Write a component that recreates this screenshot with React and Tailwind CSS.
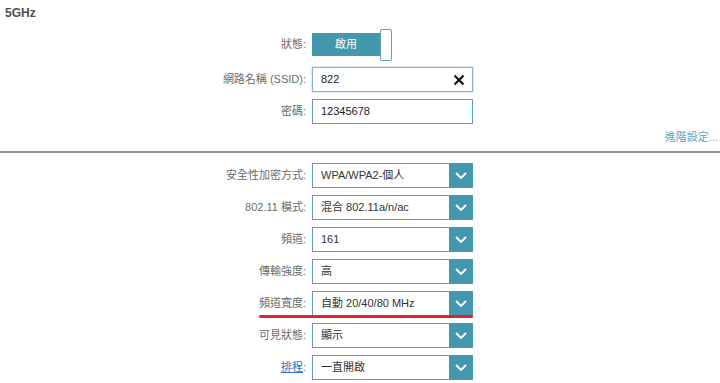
import React from 'react';

const FONT = { fontFamily: '"Liberation Sans", "Noto Sans CJK TC", sans-serif' };

const Chevron = () => (
  <svg width="12" height="8" viewBox="0 0 12 8" fill="none">
    <path d="M1.5 1.5 L6 6 L10.5 1.5" stroke="white" strokeWidth="1.8" strokeLinecap="round" strokeLinejoin="round" />
  </svg>
);

const Row = ({ label, children, link, gap = 'mb-[7px]' }) => (
  <div className={`flex items-center h-[25px] ${gap}`}>
    <div className="w-[312px] pr-[6px] text-right text-[11px] text-[#6b6b6b]">
      {link ? <span className="text-[#2f6fc0] underline">{label}</span> : label}:
    </div>
    {children}
  </div>
);

const Select = ({ value }) => (
  <div className="flex w-[161px] h-[25px] border border-[#5aa3b6] bg-white">
    <div className="flex-1 flex items-center pl-[8px] text-[11px] text-[#333]">{value}</div>
    <div className="w-[24px] -my-px -mr-px bg-[#4398ad] flex items-center justify-center">
      <Chevron />
    </div>
  </div>
);

const selects = [
  ['安全性加密方式', 'WPA/WPA2-個人'],
  ['802.11 模式', '混合 802.11a/n/ac'],
  ['頻道', '161'],
  ['傳輸強度', '高'],
  ['頻道寬度', '自動 20/40/80 MHz'],
  ['可見狀態', '顯示'],
  ['排程', '一直開啟', true],
];

export default function App() {
  return (
    <div className="w-[720px] h-[383px] bg-white overflow-hidden" style={FONT}>
      <div className="pl-[5px] pt-[6px] text-[12px] font-bold leading-[14px] text-[#4f4f4f]">5GHz</div>

      <div className="mt-[12px]">
        <Row label="狀態" gap="mb-[10px]">
          <div className="relative flex items-center h-[23px]">
            <div className="w-[68px] h-[23px] bg-[#4398ad] text-white text-[11px] flex items-center justify-center">
              啟用
            </div>
            <div className="w-[12px] h-[32px] bg-white border border-[#5aa3b6] rounded-[2px]"></div>
          </div>
        </Row>
        <Row label="網路名稱 (SSID)">
          <div className="flex items-center w-[161px] h-[25px] border border-[#7fb3d9] shadow-[0_0_2px_#9cc6e6] bg-white">
            <div className="flex-1 pl-[8px] text-[11px] text-[#222]">822</div>
            <svg width="12" height="12" viewBox="0 0 12 12" className="mr-[7px]">
              <path d="M1.5 1.5 L10.5 10.5 M10.5 1.5 L1.5 10.5" stroke="#111" strokeWidth="2.2" />
            </svg>
          </div>
        </Row>
        <Row label="密碼">
          <div className="flex items-center w-[161px] h-[25px] border border-[#5aa3b6] bg-white">
            <div className="pl-[8px] text-[11px] text-[#222]">12345678</div>
          </div>
        </Row>
      </div>

      <div className="-mt-px pr-[2px] text-right text-[11px] leading-[14px] text-[#5aa8c2]">進階設定...</div>

      <div className="mt-[7px] h-[2px] bg-[#8c8c8c]"></div>

      <div className="relative mt-[10px]">
        {selects.map(([label, value, link]) => (
          <Row key={label} label={label} link={link}>
            <Select value={value} />
          </Row>
        ))}
        <div className="absolute left-[259px] top-[152px] w-[214px] h-[3px] bg-[#e8202a] rounded-full"></div>
      </div>
    </div>
  );
}
